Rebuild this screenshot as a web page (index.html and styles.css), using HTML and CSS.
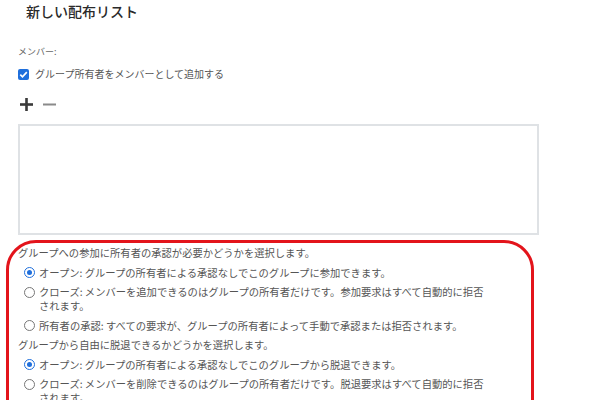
FILE: index.html
```html
<!DOCTYPE html>
<html lang="ja">
<head>
<meta charset="utf-8">
<link rel="stylesheet" href="styles.css">
</head>
<body>
<div class="page">
  <h1 class="title">新しい配布リスト</h1>
  <div class="label">メンバー:</div>
  <div class="check-row">
    <svg class="checkbox" width="11" height="11" viewBox="0 0 11 11"><rect x="0" y="0" width="11" height="11" rx="2" fill="#1f6fdc"/><path d="M2.3 5.6 L4.5 7.8 L8.8 3.2" fill="none" stroke="#fff" stroke-width="1.7"/></svg>
    <span>グループ所有者をメンバーとして追加する</span>
  </div>
  <div class="tools">
    <svg width="13" height="13" viewBox="0 0 13 13"><rect x="0" y="5.2" width="13" height="2.6" fill="#3a3a3a"/><rect x="5.2" y="0" width="2.6" height="13" fill="#3a3a3a"/></svg>
    <svg width="13" height="13" viewBox="0 0 13 13"><rect x="0" y="5.5" width="13" height="2" fill="#8a8a8a"/></svg>
  </div>
  <div class="textbox"></div>
  <div class="policy">
    <div class="heading">グループへの参加に所有者の承認が必要かどうかを選択します。</div>
    <div class="option"><span class="radio checked"></span><span class="opt-text">オープン: グループの所有者による承認なしでこのグループに参加できます。</span></div>
    <div class="option"><span class="radio"></span><span class="opt-text">クローズ: メンバーを追加できるのはグループの所有者だけです。参加要求はすべて自動的に拒否されます。</span></div>
    <div class="option"><span class="radio"></span><span class="opt-text">所有者の承認: すべての要求が、グループの所有者によって手動で承認または拒否されます。</span></div>
    <div class="heading">グループから自由に脱退できるかどうかを選択します。</div>
    <div class="option"><span class="radio checked"></span><span class="opt-text">オープン: グループの所有者による承認なしでこのグループから脱退できます。</span></div>
    <div class="option"><span class="radio"></span><span class="opt-text">クローズ: メンバーを削除できるのはグループの所有者だけです。脱退要求はすべて自動的に拒否されます。</span></div>
  </div>
</div>
</body>
</html>
```
FILE: styles.css
```css
html, body {
  margin: 0;
  padding: 0;
  overflow: hidden;
  background: #fff;
}
body {
  font-family: "Noto Sans CJK JP", "Liberation Sans", sans-serif;
  color: #555;
}
.page {
  padding-left: 18px;
  width: 582px;
  box-sizing: border-box;
}
.title {
  margin: 0;
  padding-left: 8px;
  font-size: 14px;
  line-height: 22px;
  font-weight: 500;
  color: #2a2a2a;
}
.label {
  margin-top: 23px;
  font-size: 9px;
  line-height: 14px;
  color: #666;
}
.check-row {
  margin-top: 8px;
  display: flex;
  align-items: center;
  gap: 6px;
  font-size: 10px;
  line-height: 14px;
}
.checkbox {
  display: block;
  flex: none;
}
.tools {
  margin-top: 16px;
  display: flex;
  align-items: center;
  gap: 10px;
  padding-left: 2px;
  height: 14px;
}
.tools svg {
  display: block;
}
.textbox {
  margin-top: 13px;
  width: 521px;
  height: 111px;
  box-sizing: border-box;
  border: 2px solid #dfe2e5;
  background: #fff;
}
.policy {
  margin-top: 5px;
  margin-left: -12px;
  width: 528px;
  box-sizing: border-box;
  border: 3px solid #e3141b;
  border-radius: 30px;
  padding: 3px 0 40px 9px;
  display: flex;
  flex-direction: column;
  gap: 5.5px;
  font-size: 10.3px;
  line-height: 14px;
}
.option {
  display: flex;
  align-items: flex-start;
  gap: 4px;
  padding-left: 6px;
}
.opt-text {
  max-width: 452px;
}
.radio {
  flex: none;
  width: 11px;
  height: 11px;
  margin-top: 1.5px;
  box-sizing: border-box;
  border: 1.2px solid #777;
  border-radius: 50%;
  background: #fff;
  position: relative;
}
.radio.checked {
  border: 1.5px solid #1f6fdc;
}
.radio.checked::after {
  content: "";
  position: absolute;
  left: 1.5px;
  top: 1.5px;
  width: 5px;
  height: 5px;
  border-radius: 50%;
  background: #1f6fdc;
}
```
